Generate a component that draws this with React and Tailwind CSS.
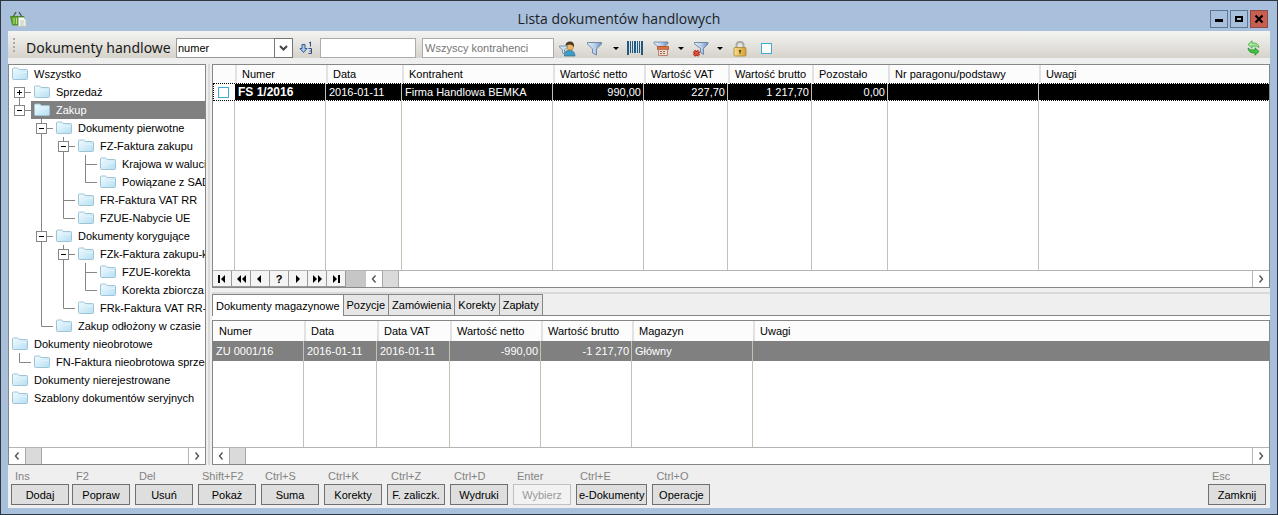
import { useState } from "react";

// guide letters: " " empty, "|" line, "T" branch, "L" last branch,
// "+" collapsed box, "-" last expanded box, "B" expanded box with line through
const TREE = [
  { guides: "", label: "Wszystko" },
  { guides: "+", label: "Sprzedaż" },
  { guides: "-", label: "Zakup" },
  { guides: " B", label: "Dokumenty pierwotne" },
  { guides: " |B", label: "FZ-Faktura zakupu" },
  { guides: " ||T", label: "Krajowa w waluci" },
  { guides: " ||L", label: "Powiązane z SAD" },
  { guides: " |T", label: "FR-Faktura VAT RR" },
  { guides: " |L", label: "FZUE-Nabycie UE" },
  { guides: " B", label: "Dokumenty korygujące" },
  { guides: " |B", label: "FZk-Faktura zakupu-k" },
  { guides: " ||T", label: "FZUE-korekta" },
  { guides: " ||L", label: "Korekta zbiorcza" },
  { guides: " |L", label: "FRk-Faktura VAT RR-" },
  { guides: " L", label: "Zakup odłożony w czasie" },
  { guides: "", label: "Dokumenty nieobrotowe" },
  { guides: "L", label: "FN-Faktura nieobrotowa sprzed" },
  { guides: "", label: "Dokumenty nierejestrowane" },
  { guides: "", label: "Szablony dokumentów seryjnych" },
];

const DOC_COLUMNS = [
  { label: "Numer", width: "w-[91px]", value: "FS 1/2016", bold: true },
  { label: "Data", width: "w-[76px]", value: "2016-01-11" },
  { label: "Kontrahent", width: "w-[151px]", value: "Firma Handlowa BEMKA" },
  { label: "Wartość netto", width: "w-[91px]", value: "990,00", right: true },
  { label: "Wartość VAT", width: "w-[84px]", value: "227,70", right: true },
  { label: "Wartość brutto", width: "w-[84px]", value: "1 217,70", right: true },
  { label: "Pozostało", width: "w-[76px]", value: "0,00", right: true },
  { label: "Nr paragonu/podstawy", width: "w-[151px]", value: "" },
  { label: "Uwagi", width: "", value: "", last: true },
];

const STORE_COLUMNS = [
  { label: "Numer", width: "w-[91px]", value: "ZU 0001/16" },
  { label: "Data", width: "w-[73px]", value: "2016-01-11" },
  { label: "Data VAT", width: "w-[73px]", value: "2016-01-11" },
  { label: "Wartość netto", width: "w-[91px]", value: "-990,00", right: true },
  { label: "Wartość brutto", width: "w-[91px]", value: "-1 217,70", right: true },
  { label: "Magazyn", width: "w-[121px]", value: "Główny" },
  { label: "Uwagi", width: "", value: "", last: true },
];

const TABS = ["Dokumenty magazynowe", "Pozycje", "Zamówienia", "Korekty", "Zapłaty"];

const MAIN_ACTIONS = [
  { key: "Ins", label: "Dodaj" },
  { key: "F2", label: "Popraw" },
];

const ACTIONS = [
  { key: "Del", label: "Usuń" },
  { key: "Shift+F2", label: "Pokaż" },
  { key: "Ctrl+S", label: "Suma" },
  { key: "Ctrl+K", label: "Korekty" },
  { key: "Ctrl+Z", label: "F. zaliczk." },
  { key: "Ctrl+D", label: "Wydruki" },
  { key: "Enter", label: "Wybierz", disabled: true },
  { key: "Ctrl+E", label: "e-Dokumenty" },
  { key: "Ctrl+O", label: "Operacje" },
];

/* ---------- icons ---------- */

const BasketIcon = () => (
  <svg className="shrink-0" width="18" height="18" viewBox="0 0 18 18">
    <path d="M3 7L6 2M12 7L9 2" stroke="#4b5a3c" strokeWidth="1.3" fill="none" />
    <path d="M0.5 6.5H14L12.5 15H2.5Z" fill="#5fa32c" stroke="#3f7f1a" strokeWidth="0.8" />
    <path d="M4 8v6M6.5 8v6" stroke="#b9e08a" />
    <path d="M8.5 7.5h5l2.500 2.500v6.500h-7.500z" fill="#f7faf4" stroke="#b4bfb0" strokeWidth="0.8" />
    <path d="M10 11h4.500M10 13h4.500M10 15h4.500" stroke="#b9c4b4" />
  </svg>
);

const FolderIcon = () => (
  <svg className="shrink-0" width="16" height="14" viewBox="0 0 16 14">
    <defs>
      <linearGradient id="folder" x1="0" y1="0" x2="1" y2="1">
        <stop offset="0" stopColor="#f2fbff" />
        <stop offset="1" stopColor="#b5dff3" />
      </linearGradient>
    </defs>
    <path d="M0.5 2Q0.5 1 1.5 1H5.5Q6.5 1 7 2.5H14.5Q15.5 2.5 15.5 3.5V11.5Q15.5 12.5 14.5 12.5H1.5Q0.5 12.5 0.5 11.5Z" fill="url(#folder)" stroke="#9fc4d6" />
    <path d="M1 7.5Q6 7.5 8 5.5H15" fill="none" stroke="#dff3fc" />
  </svg>
);

const SortIcon = () => (
  <svg width="15" height="16" viewBox="0 0 15 16">
    <path d="M3 4.500h3v4h2L4.500 12.500 1 8.500h2z" fill="#a9c8ea" stroke="#2e5b94" />
    <path d="M10 3l1.5-1v4.500M9.500 8.500h3v5h-3M10.500 11h2" fill="none" stroke="#2e4f86" />
  </svg>
);

const FunnelShape = () => (
  <>
    <defs>
      <linearGradient id="funnel" x1="0" x2="1">
        <stop offset="0" stopColor="#dbe9f7" />
        <stop offset="0.5" stopColor="#b9d0ea" />
        <stop offset="1" stopColor="#6f8fb8" />
      </linearGradient>
    </defs>
    <path d="M1.5 2.5h14v1.500L10.500 9v6l-4-2V9L1.500 4z" fill="url(#funnel)" stroke="#6882a3" strokeWidth="0.9" />
  </>
);

const FunnelIcon = () => (
  <svg width="17" height="17" viewBox="0 0 17 17">
    <FunnelShape />
  </svg>
);

const UserFilterIcon = () => (
  <svg width="17" height="17" viewBox="0 0 17 17">
    <path d="M5.500 16v-3q1-2.500 4-2.500h2q4 0 4.500 5.500z" fill="#3f9cc4" stroke="#2a6d92" strokeWidth="0.7" />
    <circle cx="11" cy="6.500" r="3.500" fill="#efb860" stroke="#a87428" strokeWidth="0.6" />
    <path d="M6.500 6Q6.500 1.500 11 1.500T15 7Q13.500 4.500 11 4.500T6.500 6z" fill="#4d3a20" />
    <path d="M0.500 6h8v1L5.500 10v4l-2-1v-3L0.500 7z" fill="#cfe0f2" stroke="#6882a3" strokeWidth="0.8" />
  </svg>
);

const BarcodeIcon = () => (
  <svg width="16" height="14" viewBox="0 0 16 14">
    <path d="M0 0h2v14h-2zM3 0h1v12h-1zM5 0h1v12h-1zM7 0h2v12h-2zM10 0h1v12h-1zM12 0h1v12h-1zM14 0h2v14h-2z" fill="#1f5a87" />
  </svg>
);

const RegisterFilterIcon = () => (
  <svg width="17" height="17" viewBox="0 0 17 17">
    <path d="M1 2h14v1.500L11 7H5L1 3.500z" fill="url(#funnel)" stroke="#6882a3" strokeWidth="0.8" />
    <path d="M4.500 9.500V6.500h11v3z" fill="#e0703c" stroke="#ac4a20" strokeWidth="0.8" />
    <path d="M5.500 9.500h9v6h-9z" fill="#f0dcd2" stroke="#a9705c" strokeWidth="0.8" />
    <path d="M7 11.500h6M7 13.500h6" stroke="#a85c42" strokeDasharray="2 1" />
  </svg>
);

const FunnelOffIcon = () => (
  <svg width="17" height="17" viewBox="0 0 17 17">
    <path d="M2.500 2.500h13.500v1.500L11.500 8.500v6l-3-2v-4L2.500 4z" fill="url(#funnel)" stroke="#6882a3" strokeWidth="0.9" />
    <path d="M2 11l5 4.500M7 11l-5 4.500" stroke="#a3281c" strokeWidth="3.400" />
    <path d="M2 11l5 4.500M7 11l-5 4.500" stroke="#e8553f" strokeWidth="1.600" />
  </svg>
);

const LockIcon = () => (
  <svg width="14" height="17" viewBox="0 0 14 17">
    <defs>
      <linearGradient id="lock" x1="0" x2="1">
        <stop offset="0" stopColor="#f9e08c" />
        <stop offset="1" stopColor="#cf9f35" />
      </linearGradient>
    </defs>
    <path d="M3.500 8V5Q3.500 2 7 2T10.500 5V8" fill="none" stroke="#a9a9a9" strokeWidth="2" />
    <rect x="1" y="7.500" width="12" height="8.500" rx="1" fill="url(#lock)" stroke="#a98433" strokeWidth="0.8" />
    <circle cx="7" cy="11" r="1.200" fill="#6b4e12" />
    <path d="M7 11v3" stroke="#6b4e12" />
  </svg>
);

const RefreshIcon = () => (
  <svg width="13" height="16" viewBox="0 0 13 16">
    <path d="M1 4.500L5 0.800V3Q11.500 2.500 12 7.500Q10.500 5.500 5 6V8.200z" fill="#a5e89a" stroke="#3fa845" strokeWidth="0.8" />
    <path d="M12 11.500L8 15.200V13Q1.500 13.500 1 8Q2.500 10.500 8 10V7.800z" fill="#41c341" stroke="#1f8f2a" strokeWidth="0.8" />
  </svg>
);

const Caret = () => (
  <svg width="6" height="3" viewBox="0 0 6 3">
    <path d="M0 0h6L3 3z" fill="#000" />
  </svg>
);

const Chevron = ({ left }) => (
  <svg width="6" height="8" viewBox="0 0 6 8">
    <path d={left ? "M4.500 0.500L1.500 4l3 3.500" : "M1.500 0.500l3 3.500-3 3.500"} fill="none" stroke="#555" strokeWidth="1.400" />
  </svg>
);

const NAV = [
  { name: "Pierwszy", d: "M1 0h2v8H1zM8 0v8L4 4z" },
  { name: "Poprzednia strona", d: "M5 0v8L1 4zM10 0v8L6 4z" },
  { name: "Poprzedni", d: "M6 0v8L2 4z" },
  { name: "Pomoc", text: "?" },
  { name: "Następny", d: "M3 0v8l4-4z" },
  { name: "Następna strona", d: "M1 0v8l4-4zM6 0v8l4-4z" },
  { name: "Ostatni", d: "M2 0v8l4-4zM7 0h2v8H7z" },
];

/* ---------- tree ---------- */

const Guide = ({ type }) => {
  const box = type === "+" || type === "-" || type === "B";
  const up = "|TLB-".includes(type);
  const down = "|TB+".includes(type);
  return (
    <svg className="shrink-0" width="22" height="18" viewBox="0 0 22 18" stroke="#868686" fill="none">
      {up && <path d="M10.500 0v9.500" />}
      {down && <path d="M10.500 9v9" />}
      {type !== "|" && type !== " " && <path d="M10.500 9.500H22" />}
      {box && <rect x="5.500" y="4.500" width="10" height="10" fill="#fff" />}
      {box && <path d="M8 9.500h5" stroke="#000" />}
      {type === "+" && <path d="M10.500 7v5" stroke="#000" />}
    </svg>
  );
};

const Tree = () => {
  const [selected, setSelected] = useState("Zakup");

  return (
    <ul className="flex-1">
      {TREE.map((node) => (
        <li key={node.label} className="flex h-[18px]">
          {node.guides.split("").map((type, i) => (
            <Guide key={i} type={type} />
          ))}
          <button
            type="button"
            onClick={() => setSelected(node.label)}
            className={`flex flex-1 items-center gap-1.5 pl-[3px] text-left whitespace-nowrap ${
              selected === node.label ? "bg-[#808080] text-white" : ""
            }`}
          >
            <FolderIcon />
            {node.label}
          </button>
        </li>
      ))}
    </ul>
  );
};

/* ---------- grids ---------- */

const ScrollBar = ({ children }) => (
  <div className="flex h-[17px] shrink-0 border-t border-[#b4b4b4] bg-white">
    {children}
    <button type="button" aria-label="W lewo" className="flex w-4 items-center justify-center">
      <Chevron left />
    </button>
    <div className="w-[17px] border-x border-[#a8a8a8] bg-[#dadada]" />
    <div className="flex-1" />
    <button type="button" aria-label="W prawo" className="flex w-[17px] items-center justify-center border-l border-[#b4b4b4]">
      <Chevron />
    </button>
  </div>
);

const DocumentsTable = () => (
  <table className="w-full table-fixed border-separate border-spacing-0">
    <thead>
      <tr className="h-[18px] bg-[#fcfcfc]">
        <th className="w-[22px] p-0" aria-label="Zaznacz" />
        {DOC_COLUMNS.map((col) => (
          <th key={col.label} className={`${col.width} truncate border-l-2 border-[#e2e2e2] p-0 pl-[5px] text-left font-normal`}>
            {col.label}
          </th>
        ))}
      </tr>
    </thead>
    <tbody>
      <tr className="h-[18px]">
        <td className="border-y border-l border-dotted border-black p-0">
          <input
            type="checkbox"
            aria-label="FS 1/2016"
            className="ml-1 block size-[11px] appearance-none border border-[#3fa9d8] bg-white"
          />
        </td>
        {DOC_COLUMNS.map((col) => (
          <td
            key={col.label}
            className={`truncate border-y border-dotted border-y-white bg-black p-0 text-white
              ${col.last ? "" : "border-r border-r-[#c3c0b4] [border-right-style:solid]"}
              ${col.right ? "pr-0.5 text-right" : "pl-[3px]"}
              ${col.bold ? "text-xs font-bold" : ""}`}
          >
            {col.value}
          </td>
        ))}
      </tr>
      <tr>
        <td className="border-r border-[#c3c0b4] p-0" />
        {DOC_COLUMNS.map((col) => (
          <td key={col.label} className={`p-0 ${col.last ? "" : "border-r border-[#c3c0b4]"}`} />
        ))}
      </tr>
    </tbody>
  </table>
);

const StoreTable = () => (
  <table className="w-full table-fixed border-separate border-spacing-0">
    <thead>
      <tr className="h-5 bg-[#fcfcfc]">
        {STORE_COLUMNS.map((col, i) => (
          <th
            key={col.label}
            className={`${col.width} truncate p-0 text-left font-normal ${i === 0 ? "pl-1.5" : "border-l-2 border-[#e2e2e2] pl-[5px]"}`}
          >
            {col.label}
          </th>
        ))}
      </tr>
    </thead>
    <tbody>
      <tr className="h-5 bg-[#808080] text-white">
        {STORE_COLUMNS.map((col) => (
          <td
            key={col.label}
            className={`truncate p-0 ${col.last ? "" : "border-r border-[#c3c0b4]"} ${col.right ? "pr-0.5 text-right" : "pl-[3px]"}`}
          >
            {col.value}
          </td>
        ))}
      </tr>
      <tr>
        {STORE_COLUMNS.map((col) => (
          <td key={col.label} className={`p-0 ${col.last ? "" : "border-r border-[#c3c0b4]"}`} />
        ))}
      </tr>
    </tbody>
  </table>
);

/* ---------- bars ---------- */

const TitleBar = () => (
  <header className="flex h-[30px] shrink-0 items-center px-0.5 pt-1.5">
    <BasketIcon />
    <h1 className="flex-1 text-center font-['Open_Sans',sans-serif] text-[14px] leading-5 text-[#1d1d24]">
      Lista dokumentów handlowych
    </h1>
    <div className="flex gap-0.5">
      <button type="button" aria-label="Minimalizuj" className="size-[18px] border border-[#5d7597]">
        <svg width="16" height="16" viewBox="0 0 16 16">
          <path d="M4 8h8v3H4z" />
        </svg>
      </button>
      <button type="button" aria-label="Maksymalizuj" className="size-[18px] border border-[#5d7597]">
        <svg width="16" height="16" viewBox="0 0 16 16">
          <path d="M5 6h6v4H5z" fill="none" stroke="#000" strokeWidth="2" />
        </svg>
      </button>
      <button type="button" aria-label="Zamknij okno" className="size-[18px] border border-[#8a4a48] bg-[#c75f50]">
        <svg width="16" height="16" viewBox="0 0 16 16">
          <path d="M4.500 4.500l7 7M11.500 4.500l-7 7" stroke="#000" strokeWidth="2.200" />
        </svg>
      </button>
    </div>
  </header>
);

const Toolbar = () => (
  <div className="h-[33px] shrink-0">
    <div className="flex h-[27px] items-end bg-linear-to-b from-[#f4f4f2] to-[#d6d3cb] pr-2.5 pl-1">
      <div className="flex h-full items-center">
        <svg width="4" height="16" viewBox="0 0 4 16">
          <path d="M1 1h2v2H1zM1 5h2v2H1zM1 9h2v2H1zM1 13h2v2H1z" fill="#aaa" />
        </svg>
      </div>
      <h2 className="ml-2.5 w-[150px] font-['Noto_Sans',sans-serif] text-[14px] leading-5 whitespace-nowrap text-[#1a1a1a]">
        Dokumenty handlowe
      </h2>
      <div className="relative">
        <select aria-label="Szukaj według" defaultValue="numer" className="block h-5 w-[117px] appearance-none border border-[#9a9a9a] bg-white pl-px">
          <option>numer</option>
          <option>data</option>
          <option>kontrahent</option>
        </select>
        <span className="pointer-events-none absolute inset-y-0 right-0 flex w-[19px] items-center justify-center border border-[#777] bg-white">
          <svg width="9" height="6" viewBox="0 0 9 6">
            <path d="M1 1l3.500 3.500L8 1" fill="none" stroke="#444" strokeWidth="2" />
          </svg>
        </span>
      </div>
      <button type="button" aria-label="Sortuj" className="mb-0.5 ml-1.5 w-[21px]">
        <SortIcon />
      </button>
      <input aria-label="Szukana wartość" className="h-5 w-24 border border-[#ababab] bg-white px-0.5" />
      <input
        aria-label="Kontrahent"
        placeholder="Wszyscy kontrahenci"
        className="ml-1.5 h-5 w-[132px] border border-[#ababab] bg-white px-0.5 placeholder:text-[#757575]"
      />
      <div className="ml-[5px] flex h-5 items-center">
        <button type="button" aria-label="Kontrahent z listy"><UserFilterIcon /></button>
        <button type="button" aria-label="Filtr" className="ml-2.5 flex items-center gap-2.5"><FunnelIcon /><Caret /></button>
        <button type="button" aria-label="Kod kreskowy" className="ml-2"><BarcodeIcon /></button>
        <button type="button" aria-label="Filtr kasy" className="ml-2.5 flex items-center gap-2"><RegisterFilterIcon /><Caret /></button>
        <button type="button" aria-label="Usuń filtr" className="ml-2 flex items-center gap-2"><FunnelOffIcon /><Caret /></button>
        <button type="button" aria-label="Blokada" className="ml-2.5"><LockIcon /></button>
        <input type="checkbox" aria-label="Zaznacz wszystko" className="ml-3.5 size-[11px] appearance-none border border-[#3fa9d8] bg-white" />
      </div>
      <button type="button" aria-label="Odśwież" className="mb-0.5 ml-auto">
        <RefreshIcon />
      </button>
    </div>
  </div>
);

const ActionButton = ({ action }) => (
  <div>
    <div className="h-4 w-0 pl-1 leading-4 whitespace-nowrap text-[#838383]">{action.key}</div>
    <button
      type="button"
      disabled={action.disabled}
      className={`h-[21px] min-w-[58px] border px-0.5 ${
        action.disabled ? "border-[#c0c0c0] bg-[#f2f2f2] text-[#999]" : "border-[#707070] bg-[#dedede]"
      }`}
    >
      {action.label}
    </button>
  </div>
);

export default function App() {
  const [tab, setTab] = useState(TABS[0]);

  return (
    <div className="flex min-h-screen flex-col border border-[#30363f] bg-[#a8c0dc] px-[7px] pb-1.5 font-['Liberation_Sans',Arial,sans-serif] text-[11px] leading-[14px] text-black">
      <TitleBar />
      <main className="flex flex-1 flex-col bg-[#efefef]">
        <Toolbar />

        <div className="flex flex-1">
          <nav className="flex w-[198px] shrink-0 flex-col overflow-hidden border border-[#868686] bg-white">
            <Tree />
            <ScrollBar />
          </nav>
          <div className="mx-0.5 w-0.5 bg-[#dadada]" />

          <div className="flex min-w-0 flex-1 flex-col">
            <section className="flex h-56 flex-col border border-[#868686] bg-white">
              <div className="flex flex-1">
                <DocumentsTable />
              </div>
              <ScrollBar>
                {NAV.map((item) => (
                  <button
                    key={item.name}
                    type="button"
                    aria-label={item.name}
                    className="flex w-[19px] items-center justify-center border-r border-b border-[#9a9a9a] bg-[#f4f4f4] font-bold"
                  >
                    {item.text || (
                      <svg width="10" height="8" viewBox="0 0 10 8">
                        <path d={item.d} />
                      </svg>
                    )}
                  </button>
                ))}
                <div className="w-5 bg-[#c6c6c6]" />
              </ScrollBar>
            </section>

            <div className="mt-1 border-t-2 border-[#dadada]">
              <div role="tablist" className="flex h-[22px] border-l border-[#868686]">
                {TABS.map((name) => (
                  <button
                    key={name}
                    type="button"
                    role="tab"
                    aria-selected={tab === name}
                    onClick={() => setTab(name)}
                    className={`border-t border-r border-[#868686] px-[3px] ${tab === name ? "bg-white" : "border-b bg-[#e6e6e6]"}`}
                  >
                    {name}
                  </button>
                ))}
                <div className="flex-1 border-b border-[#868686]" />
              </div>
              <div className="h-1 bg-white" />
            </div>

            <section className="flex flex-1 flex-col border border-[#868686] bg-white">
              <div className="flex flex-1">
                <StoreTable />
              </div>
              <ScrollBar />
            </section>
          </div>
        </div>

        <footer className="flex items-start justify-between pt-[3px] pr-1 pb-[3px] pl-[3px]">
          <div className="flex gap-[5px]">
            <div className="flex gap-[3px]">
              {MAIN_ACTIONS.map((action) => (
                <ActionButton key={action.key} action={action} />
              ))}
            </div>
            {ACTIONS.map((action) => (
              <ActionButton key={action.key} action={action} />
            ))}
          </div>
          <ActionButton action={{ key: "Esc", label: "Zamknij" }} />
        </footer>
      </main>
    </div>
  );
}
